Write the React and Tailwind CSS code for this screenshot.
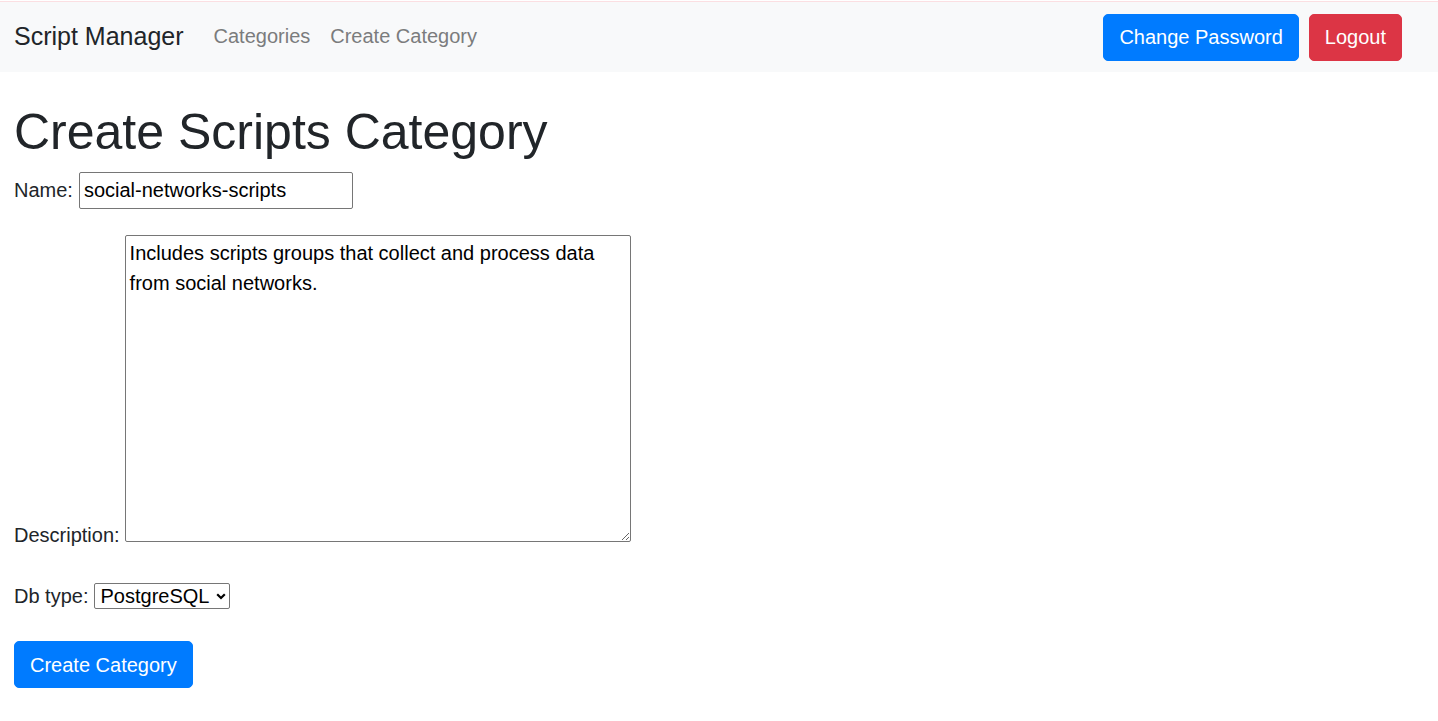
import React, { useState } from 'react';

const font = { fontFamily: '"Liberation Sans", Arial, sans-serif' };

function NavBar() {
  return (
    <div>
      <div className="h-px bg-white" />
      <div className="h-px bg-[#fbdfe2]" />
      <nav className="flex h-[70px] items-center bg-[#f8f9fa] pl-[14px] pr-[36px]">
        <a href="#" className="mr-[20px] mb-[2px] text-[25px] leading-[37px] text-[#212529]">Script Manager</a>
        <a href="#" className="mb-[2px] px-[10px] text-[20px] leading-[30px] text-[#7b7c7d]">Categories</a>
        <a href="#" className="mb-[2px] px-[10px] text-[20px] leading-[30px] text-[#7b7c7d]">Create Category</a>
        <div className="ml-auto flex items-center gap-[10px]">
          <button className="h-[47px] rounded-[5px] border border-[#007bff] bg-[#007bff] px-[15px] text-[20px] leading-[30px] text-white">
            Change Password
          </button>
          <button className="h-[47px] rounded-[5px] border border-[#dc3545] bg-[#dc3545] px-[15px] text-[20px] leading-[30px] text-white">
            Logout
          </button>
        </div>
      </nav>
    </div>
  );
}

export default function App() {
  const [name, setName] = useState('social-networks-scripts');
  const [description, setDescription] = useState(
    'Includes scripts groups that collect and process data from social networks.'
  );
  const [dbType, setDbType] = useState('postgresql');

  return (
    <div className="min-h-screen bg-white text-[20px] text-[#212529]" style={font}>
      <NavBar />

      <main className="pl-[14px]">
        <h1 className="mt-[30px] mb-[10px] text-[50px] font-normal leading-[60px]">Create Scripts Category</h1>

        <form onSubmit={e => e.preventDefault()}>
          {/* Name */}
          <div className="flex items-center">
            <label htmlFor="name" className="mr-[6px] mb-[1px] leading-[30px]">Name:</label>
            <input
              id="name"
              value={name}
              onChange={e => setName(e.target.value)}
              className="h-[37px] w-[274px] rounded-[2px] border border-[#767676] px-[4px] pb-[1px] text-[20px] leading-[30px] text-black outline-none"
            />
          </div>

          {/* Description */}
          <div className="mt-[26px] flex items-end">
            <label htmlFor="description" className="mr-[5px] mb-[-3px] leading-[20px]">Description:</label>
            <textarea
              id="description"
              value={description}
              onChange={e => setDescription(e.target.value)}
              className="h-[307px] w-[506px] rounded-[2px] border border-[#767676] py-[2px] pl-[4px] pr-[2px] text-[20px] leading-[30px] text-black outline-none"
            />
          </div>

          {/* Db type */}
          <div className="mt-[41px] flex items-center">
            <label htmlFor="dbtype" className="mr-[6px] leading-[26px]">Db type:</label>
            <div className="relative">
              <select
                id="dbtype"
                value={dbType}
                onChange={e => setDbType(e.target.value)}
                className="block h-[26px] w-[136px] appearance-none rounded-[2px] border border-[#767676] bg-white pl-[5px] text-[20px] leading-[24px] text-black outline-none"
              >
                <option value="postgresql">PostgreSQL</option>
                <option value="mysql">MySQL</option>
                <option value="sqlite">SQLite</option>
              </select>
              <svg
                className="pointer-events-none absolute right-[4px] top-[10px]"
                width="10"
                height="7"
                viewBox="0 0 10 7"
                fill="none"
              >
                <path d="M1.2 1.2 L5 5 L8.8 1.2" stroke="#000" strokeWidth="2.2" />
              </svg>
            </div>
          </div>

          <button
            type="submit"
            className="mt-[32px] h-[47px] rounded-[5px] border border-[#007bff] bg-[#007bff] px-[15px] text-[20px] leading-[30px] text-white"
          >
            Create Category
          </button>
        </form>
      </main>
    </div>
  );
}
